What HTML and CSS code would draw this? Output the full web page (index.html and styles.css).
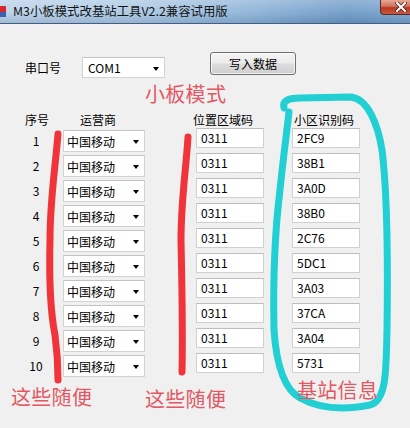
FILE: index.html
```html
<!DOCTYPE html>
<html>
<head>
<meta charset="utf-8">
<link rel="stylesheet" href="styles.css">
</head>
<body>
<div class="window">
  <div class="titlebar">
    <span class="appicon"><i class="ic-red"></i><i class="ic-blue"></i></span>
    <span class="title">M3小板模式改基站工具V2.2兼容试用版</span>
    <span class="close">
      <svg width="12" height="10" viewBox="0 0 12 10"><path d="M2 1 L10 9 M10 1 L2 9" stroke="#4a2020" stroke-width="3.4" stroke-linecap="square"/><path d="M2 1 L10 9 M10 1 L2 9" stroke="#ffffff" stroke-width="2" stroke-linecap="square"/></svg>
    </span>
  </div>
  <div class="client">
    <div class="toprow">
      <span class="lbl">串口号</span>
      <div class="combo com"><span>COM1</span><i class="arrow"></i></div>
      <div class="btn">写入数据</div>
    </div>
    <div class="header">
      <span class="h-num">序号</span>
      <span class="h-op">运营商</span>
      <span class="h-lac">位置区域码</span>
      <span class="h-cid">小区识别码</span>
    </div>
    <div class="rows">
      <div class="row"><span class="num">1</span><div class="combo op"><span>中国移动</span><i class="arrow"></i></div><div class="field lac">0311</div><div class="field cid">2FC9</div></div>
      <div class="row"><span class="num">2</span><div class="combo op"><span>中国移动</span><i class="arrow"></i></div><div class="field lac">0311</div><div class="field cid">38B1</div></div>
      <div class="row"><span class="num">3</span><div class="combo op"><span>中国移动</span><i class="arrow"></i></div><div class="field lac">0311</div><div class="field cid">3A0D</div></div>
      <div class="row"><span class="num">4</span><div class="combo op"><span>中国移动</span><i class="arrow"></i></div><div class="field lac">0311</div><div class="field cid">38B0</div></div>
      <div class="row"><span class="num">5</span><div class="combo op"><span>中国移动</span><i class="arrow"></i></div><div class="field lac">0311</div><div class="field cid">2C76</div></div>
      <div class="row"><span class="num">6</span><div class="combo op"><span>中国移动</span><i class="arrow"></i></div><div class="field lac">0311</div><div class="field cid">5DC1</div></div>
      <div class="row"><span class="num">7</span><div class="combo op"><span>中国移动</span><i class="arrow"></i></div><div class="field lac">0311</div><div class="field cid">3A03</div></div>
      <div class="row"><span class="num">8</span><div class="combo op"><span>中国移动</span><i class="arrow"></i></div><div class="field lac">0311</div><div class="field cid">37CA</div></div>
      <div class="row"><span class="num">9</span><div class="combo op"><span>中国移动</span><i class="arrow"></i></div><div class="field lac">0311</div><div class="field cid">3A04</div></div>
      <div class="row"><span class="num">10</span><div class="combo op"><span>中国移动</span><i class="arrow"></i></div><div class="field lac">0311</div><div class="field cid">5731</div></div>
    </div>
  </div>

  <svg class="ink" width="410" height="428" viewBox="0 0 410 428">
    <path d="M58 134 C55 170 50 200 50 240 C49 280 50 310 55 335 C57 350 58 365 58 380" fill="none" stroke="#f0353a" stroke-width="7" stroke-linecap="round"/>
    <path d="M188 137 C186 170 181 200 181 240 C182 290 183 330 182 372" fill="none" stroke="#f0353a" stroke-width="7" stroke-linecap="round"/>
    <path d="M284 108 C282 100 290 98 300 98 L350 97 C368 98 378 125 382 150 C387 190 388 260 387 330 C386 370 387 400 370 405 C345 410 320 409 300 398 C282 388 276 360 274 330 C273 280 275 230 280 190 C283 160 287 130 289 112" fill="none" stroke="#22d0d4" stroke-width="7" stroke-linecap="round" stroke-linejoin="round"/>
  </svg>
  <div class="note n-board">小板模式</div>
  <div class="note n-any1">这些随便</div>
  <div class="note n-any2">这些随便</div>
  <div class="note n-info">基站信息</div>
</div>
</body>
</html>
```

FILE: styles.css
```css
html, body {
  margin: 0;
  padding: 0;
  background: #f0f0f0;
}

.window {
  position: relative;
  width: 410px;
  height: 428px;
  overflow: hidden;
  background: #f0f0f0;
  font-family: "Noto Sans CJK SC", "Noto Sans", sans-serif;
  font-size: 12px;
  color: #000;
}

.titlebar {
  height: 23px;
  border-bottom: 1px solid #3f5f84;
  display: flex;
  align-items: flex-start;
  background:
    linear-gradient(180deg, rgba(255,255,255,0.25) 0%, rgba(255,255,255,0.05) 55%, rgba(0,20,60,0.12) 100%),
    linear-gradient(90deg, #bad2ea 0%, #a9c7e3 35%, #8fb4d8 60%, #6f9bc8 85%, #7aa4cd 100%);
}

.appicon {
  width: 6px;
  height: 11px;
  margin-top: 6px;
  display: flex;
  flex-direction: column;
}
.ic-red { height: 6px; background: #d8282c; }
.ic-blue { height: 5px; background: #3a62b0; }

.title {
  margin-left: 7px;
  margin-top: 3px;
  line-height: 16px;
  font-size: 12.4px;
  color: #141414;
  white-space: nowrap;
}

.close {
  margin-left: auto;
  width: 32px;
  height: 15px;
  margin-right: -2px;
  box-sizing: border-box;
  border: 1px solid #5a2a2a;
  border-top: none;
  border-bottom-left-radius: 4px;
  background: linear-gradient(180deg, #e8a896 0%, #d0705c 45%, #b8371f 55%, #c85a3e 100%);
  display: flex;
  align-items: center;
  justify-content: flex-end;
  padding-right: 4px;
}

.client {
  padding-top: 28px;
}

.toprow {
  display: flex;
  align-items: flex-start;
  padding-left: 25px;
  height: 26px;
}

.lbl {
  width: 36px;
  margin-top: 5px;
  line-height: 21px;
}

.combo {
  position: relative;
  box-sizing: border-box;
  background: #ffffff;
  border: 1px solid #d2d2d2;
  border-top-color: #c4c4c4;
  display: flex;
  align-items: center;
  padding-left: 3px;
}

.arrow {
  position: absolute;
  right: 5px;
  top: 50%;
  margin-top: -1px;
  width: 0;
  height: 0;
  border-left: 3.5px solid transparent;
  border-right: 3.5px solid transparent;
  border-top: 4px solid #000;
}

.com {
  margin-left: 21px;
  margin-top: 5px;
  width: 83px;
  height: 21px;
  padding-left: 5px;
}

.btn {
  margin-left: 45px;
  width: 86px;
  height: 23px;
  box-sizing: border-box;
  border: 1px solid #707070;
  border-radius: 3px;
  background: linear-gradient(180deg, #f4f4f4 0%, #ebebeb 48%, #dddddd 52%, #cfcfcf 100%);
  box-shadow: inset 0 0 0 1px rgba(255,255,255,0.7);
  display: flex;
  align-items: center;
  justify-content: center;
  line-height: 14px;
}

.header {
  display: flex;
  padding-left: 25px;
  margin-top: 34px;
  height: 16px;
  line-height: 16px;
  white-space: nowrap;
}
.h-num { width: 24px; }
.h-op { margin-left: 31px; width: 36px; }
.h-lac { margin-left: 77px; width: 60px; }
.h-cid { margin-left: 41px; }

.rows {
  display: flex;
  flex-direction: column;
}

.row {
  display: flex;
  align-items: flex-start;
  height: 25px;
  padding-left: 22px;
}

.num {
  width: 28px;
  margin-top: 2px;
  line-height: 22px;
  text-align: center;
}

.op {
  margin-left: 13px;
  margin-top: 2px;
  width: 82px;
  height: 22px;
}

.field {
  box-sizing: border-box;
  width: 68px;
  height: 20px;
  background: #ffffff;
  border: 1px solid #d0d0d0;
  border-top-color: #bdbdbd;
  padding-left: 4px;
  line-height: 18px;
}
.lac { margin-left: 51px; }
.cid { margin-left: 28px; }

.ink {
  position: absolute;
  left: 0;
  top: 0;
  pointer-events: none;
}

.note {
  position: absolute;
  font-size: 20px;
  line-height: 24px;
  color: #e25763;
  white-space: nowrap;
  letter-spacing: 0.3px;
}
.n-board { left: 145px; top: 82px; }
.n-any1 { left: 11px; top: 385px; }
.n-any2 { left: 145px; top: 387px; }
.n-info { left: 297px; top: 378px; }
```
